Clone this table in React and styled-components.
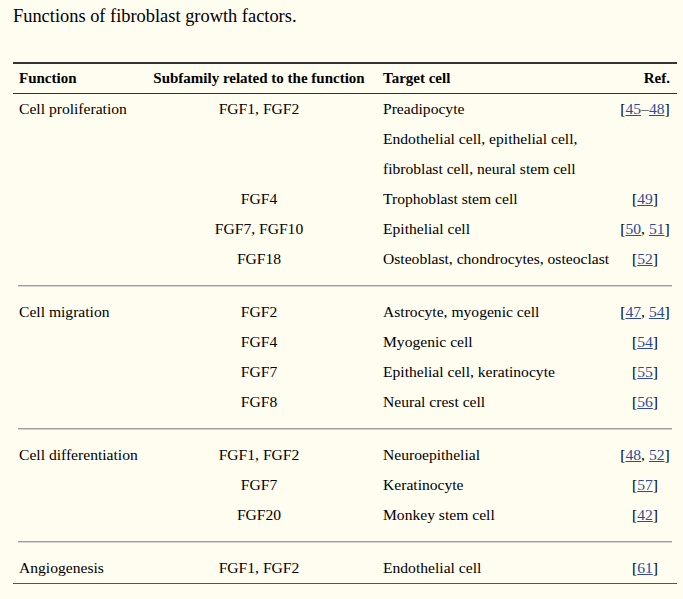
import React from "react";
import styled, { createGlobalStyle } from "styled-components";

const Global = createGlobalStyle`
  html, body { margin: 0; padding: 0; background: #fffcf0; }
  body { font-family: "Liberation Serif", "Times New Roman", serif; color: #000; }
`;

const Page = styled.div`
  padding: 5px 6px 16px 13px;
  width: 664px;
`;

const Title = styled.div`
  font-size: 18.4px;
  line-height: 23px;
  margin-bottom: 34px;
`;

const Table = styled.table`
  width: 664px;
  border-collapse: collapse;
  table-layout: fixed;
  font-size: 15.6px;
  border-top: 2px solid #333;
  border-bottom: 1px solid #555;
`;

const Col = styled.col`
  width: ${(p) => p.$w}px;
`;

const HeadCell = styled.th`
  height: 29px;
  padding: 0 ${(p) => (p.$align === "right" ? "7px" : "6px")};
  font-size: 15px;
  font-weight: bold;
  text-align: ${(p) => p.$align || "left"};
  border-bottom: 1px solid #333;
  white-space: nowrap;
`;

const Cell = styled.td`
  height: 30px;
  padding: 0 ${(p) => (p.$align === "center" ? "2px" : "6px")};
  text-align: ${(p) => p.$align || "left"};
  vertical-align: middle;
  white-space: nowrap;
`;

const SepCell = styled.td`
  height: 23px;
  padding: 0 5px;
  vertical-align: middle;
`;

const Rule = styled.div`
  border-top: 1px solid #a0a0a0;
  border-bottom: 1px solid #d4d4d4;
`;

const RefLink = styled.a`
  color: #2d4a9e;
  text-decoration: underline;
`;

const sections = [
  {
    fn: "Cell proliferation",
    rows: [
      ["FGF1, FGF2", "Preadipocyte", [["45", "–", "48"]]],
      ["", "Endothelial cell, epithelial cell,", null],
      ["", "fibroblast cell, neural stem cell", null],
      ["FGF4", "Trophoblast stem cell", ["49"]],
      ["FGF7, FGF10", "Epithelial cell", ["50", "51"]],
      ["FGF18", "Osteoblast, chondrocytes, osteoclast", ["52"]],
    ],
  },
  {
    fn: "Cell migration",
    rows: [
      ["FGF2", "Astrocyte, myogenic cell", ["47", "54"]],
      ["FGF4", "Myogenic cell", ["54"]],
      ["FGF7", "Epithelial cell, keratinocyte", ["55"]],
      ["FGF8", "Neural crest cell", ["56"]],
    ],
  },
  {
    fn: "Cell differentiation",
    rows: [
      ["FGF1, FGF2", "Neuroepithelial", ["48", "52"]],
      ["FGF7", "Keratinocyte", ["57"]],
      ["FGF20", "Monkey stem cell", ["42"]],
    ],
  },
  {
    fn: "Angiogenesis",
    rows: [["FGF1, FGF2", "Endothelial cell", ["61"]]],
  },
];

function Refs({ refs }) {
  if (!refs) return null;
  return (
    <>
      [
      {refs.map((r, i) => {
        if (Array.isArray(r)) {
          return (
            <React.Fragment key={i}>
              <RefLink href="#">{r[0]}</RefLink>
              {r[1]}
              <RefLink href="#">{r[2]}</RefLink>
            </React.Fragment>
          );
        }
        return (
          <React.Fragment key={i}>
            {i > 0 ? ", " : ""}
            <RefLink href="#">{r}</RefLink>
          </React.Fragment>
        );
      })}
      ]
    </>
  );
}

export default function App() {
  return (
    <Page>
      <Global />
      <Title>Functions of fibroblast growth factors.</Title>
      <Table>
        <colgroup>
          <Col $w={128} />
          <Col $w={236} />
          <Col $w={236} />
          <Col $w={64} />
        </colgroup>
        <thead>
          <tr>
            <HeadCell>Function</HeadCell>
            <HeadCell $align="center">Subfamily related to the function</HeadCell>
            <HeadCell>Target cell</HeadCell>
            <HeadCell $align="right">Ref.</HeadCell>
          </tr>
        </thead>
        <tbody>
          {sections.map((s, si) => (
            <React.Fragment key={s.fn}>
              {si > 0 && (
                <tr>
                  <SepCell colSpan={4}>
                    <Rule />
                  </SepCell>
                </tr>
              )}
              {s.rows.map((r, ri) => (
                <tr key={ri}>
                  <Cell>{ri === 0 ? s.fn : ""}</Cell>
                  <Cell $align="center">{r[0]}</Cell>
                  <Cell>{r[1]}</Cell>
                  <Cell $align="center">
                    <Refs refs={r[2]} />
                  </Cell>
                </tr>
              ))}
            </React.Fragment>
          ))}
        </tbody>
      </Table>
    </Page>
  );
}
